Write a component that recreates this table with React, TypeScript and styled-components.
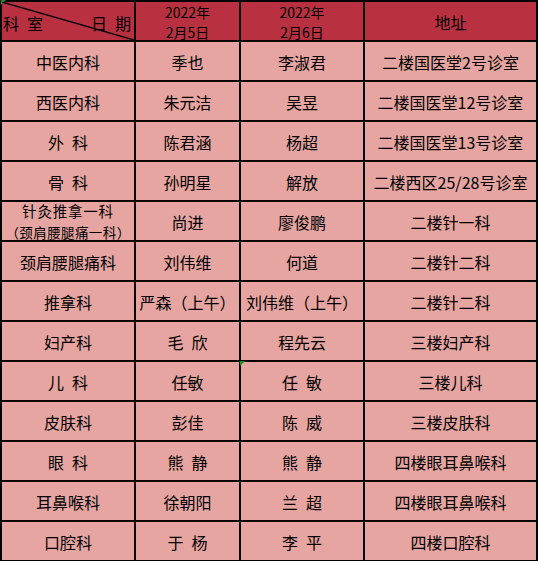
import React from "react";
import styled, { createGlobalStyle } from "styled-components";

const GlobalStyle = createGlobalStyle`
  html, body {
    margin: 0;
    padding: 0;
    background: #ffffff;
  }
  body {
    font-family: "Noto Sans CJK SC", "Noto Sans", sans-serif;
    color: #000;
  }
`;

const Sheet = styled.div`
  display: grid;
  grid-template-columns: 132px 103px 122px 171px;
  grid-auto-rows: 38px;
  gap: 2px;
  padding: 2px;
  width: 538px;
  box-sizing: border-box;
  background: #000;
  position: relative;
`;

const Cell = styled.div<{ $header?: boolean; $mark?: boolean }>`
  position: relative;
  display: flex;
  flex-direction: column;
  align-items: center;
  justify-content: center;
  background: ${(p) => (p.$header ? "#b93140" : "#e6a5a0")};
  font-size: 16px;
  line-height: 18px;
  text-align: center;
  white-space: nowrap;
  padding-top: 1px;
  box-sizing: border-box;
  &::before {
    content: "";
    display: ${(p) => (p.$mark ? "block" : "none")};
    position: absolute;
    left: -1px;
    top: -1px;
    width: 0;
    height: 0;
    border-top: 5px solid #1f8a1f;
    border-right: 5px solid transparent;
  }
`;

const DateLine = styled.span`
  font-size: 14px;
  line-height: 20px;
`;

const StackLine = styled.span<{ $size: number; $spacing?: number }>`
  font-size: ${(p) => p.$size}px;
  letter-spacing: ${(p) => p.$spacing ?? 0}px;
  line-height: 20.5px;
`;

const CornerCell = styled.div`
  position: relative;
  background: #b93140;
  display: flex;
  align-items: center;
  justify-content: space-between;
  padding: 3px 3px 0 1px;
  font-size: 16px;
  white-space: nowrap;
  &::before {
    content: "";
    position: absolute;
    left: -1px;
    top: -2px;
    width: 0;
    height: 0;
    border-top: 5px solid #1f8a1f;
    border-right: 5px solid transparent;
  }
`;

const Diagonal = styled.svg`
  position: absolute;
  left: 0;
  top: 0;
  width: 100%;
  height: 100%;
  pointer-events: none;
`;

const Label = styled.span``;

type Row = { dept: React.ReactNode; d1: string; d2: string; place: string; mark?: boolean };

const S = "\u2002";

const rows: Row[] = [
  { dept: "中医内科", d1: "季也", d2: "李淑君", place: "二楼国医堂2号诊室" },
  { dept: "西医内科", d1: "朱元洁", d2: "吴昱", place: "二楼国医堂12号诊室" },
  { dept: `外${S}科`, d1: "陈君涵", d2: "杨超", place: "二楼国医堂13号诊室" },
  { dept: `骨${S}科`, d1: "孙明星", d2: "解放", place: "二楼西区25/28号诊室" },
  {
    dept: (
      <>
        <StackLine $size={14.5} $spacing={0.8}>针灸推拿一科</StackLine>
        <StackLine $size={13.5} $spacing={0.4}>（颈肩腰腿痛一科）</StackLine>
      </>
    ),
    d1: "尚进",
    d2: "廖俊鹏",
    place: "二楼针一科",
  },
  { dept: "颈肩腰腿痛科", d1: "刘伟维", d2: "何道", place: "二楼针二科" },
  { dept: "推拿科", d1: "严森（上午）", d2: "刘伟维（上午）", place: "二楼针二科" },
  { dept: "妇产科", d1: `毛${S}欣`, d2: "程先云", place: "三楼妇产科" },
  { dept: `儿${S}科`, d1: "任敏", d2: `任${S}敏`, place: "三楼儿科", mark: true },
  { dept: "皮肤科", d1: "彭佳", d2: `陈${S}威`, place: "三楼皮肤科" },
  { dept: `眼${S}科`, d1: `熊${S}静`, d2: `熊${S}静`, place: "四楼眼耳鼻喉科" },
  { dept: "耳鼻喉科", d1: "徐朝阳", d2: `兰${S}超`, place: "四楼眼耳鼻喉科" },
  { dept: "口腔科", d1: `于${S}杨`, d2: `李${S}平`, place: "四楼口腔科" },
];

export default function App() {
  return (
    <>
      <GlobalStyle />
      <Sheet>
        <CornerCell>
          <Diagonal viewBox="0 0 132 38" preserveAspectRatio="none">
            <line x1="0" y1="0" x2="132" y2="38" stroke="#000" strokeWidth="1.3" />
          </Diagonal>
          <Label>科{S}室</Label>
          <Label>日{S}期</Label>
        </CornerCell>
        <Cell $header>
          <DateLine>2022年</DateLine>
          <DateLine>2月5日</DateLine>
        </Cell>
        <Cell $header>
          <DateLine>2022年</DateLine>
          <DateLine>2月6日</DateLine>
        </Cell>
        <Cell $header>地址</Cell>
        {rows.map((r, i) => (
          <React.Fragment key={i}>
            <Cell>{r.dept}</Cell>
            <Cell>{r.d1}</Cell>
            <Cell $mark={r.mark}>{r.d2}</Cell>
            <Cell>{r.place}</Cell>
          </React.Fragment>
        ))}
      </Sheet>
    </>
  );
}
